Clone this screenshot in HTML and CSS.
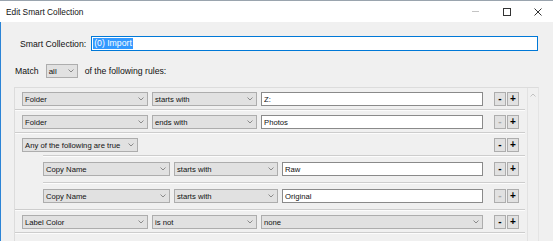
FILE: index.html
```html
<!DOCTYPE html>
<html>
<head>
<meta charset="utf-8">
<link rel="stylesheet" href="styles.css">
</head>
<body>
<div class="win">
  <div class="titlebar">
    <span class="title">Edit Smart Collection</span>
    <div class="caps">
      <div class="cap"><svg width="8" height="2" viewBox="0 0 8 2"><line x1="0" y1="0.5" x2="7" y2="0.5" stroke="#c4c4c4" stroke-width="1"/></svg></div>
      <div class="cap"><svg width="8" height="8" viewBox="0 0 8 8"><rect x="0.5" y="0.5" width="7" height="7" fill="none" stroke="#333" stroke-width="1"/></svg></div>
      <div class="cap"><svg width="8" height="8" viewBox="0 0 8 8"><path d="M0.5 0.5 L7.5 7.5 M7.5 0.5 L0.5 7.5" stroke="#333" stroke-width="1"/></svg></div>
    </div>
  </div>
  <div class="content">
    <div class="namerow">
      <span class="lbl">Smart Collection:</span>
      <div class="nameinput"><span class="seltext">(0) Import</span></div>
    </div>
    <div class="matchrow">
      <span class="lbl">Match</span>
      <div class="dd dd-all"><span>all</span><svg class="chev" width="6" height="4" viewBox="0 0 6 4"><polyline points="0.5,0.5 3,3 5.5,0.5" fill="none" stroke="#8a8a8a" stroke-width="1"/></svg></div>
      <span class="lbl">of the following rules:</span>
    </div>
    <div class="panel">
      <div class="rows">
        <div class="rule">
          <div class="dd w-field"><span>Folder</span><svg class="chev" width="6" height="4" viewBox="0 0 6 4"><polyline points="0.5,0.5 3,3 5.5,0.5" fill="none" stroke="#8a8a8a" stroke-width="1"/></svg></div>
          <div class="dd w-op"><span>starts with</span><svg class="chev" width="6" height="4" viewBox="0 0 6 4"><polyline points="0.5,0.5 3,3 5.5,0.5" fill="none" stroke="#8a8a8a" stroke-width="1"/></svg></div>
          <div class="tf w-val">Z:</div>
          <div class="btns"><div class="btn">-</div><div class="btn">+</div></div>
        </div>
        <div class="sep"></div>
        <div class="rule">
          <div class="dd w-field"><span>Folder</span><svg class="chev" width="6" height="4" viewBox="0 0 6 4"><polyline points="0.5,0.5 3,3 5.5,0.5" fill="none" stroke="#8a8a8a" stroke-width="1"/></svg></div>
          <div class="dd w-op"><span>ends with</span><svg class="chev" width="6" height="4" viewBox="0 0 6 4"><polyline points="0.5,0.5 3,3 5.5,0.5" fill="none" stroke="#8a8a8a" stroke-width="1"/></svg></div>
          <div class="tf w-val">Photos</div>
          <div class="btns"><div class="btn off">-</div><div class="btn">+</div></div>
        </div>
        <div class="sep"></div>
        <div class="rule">
          <div class="dd w-any"><span>Any of the following are true</span><svg class="chev" width="6" height="4" viewBox="0 0 6 4"><polyline points="0.5,0.5 3,3 5.5,0.5" fill="none" stroke="#8a8a8a" stroke-width="1"/></svg></div>
          <div class="btns"><div class="btn">-</div><div class="btn">+</div></div>
        </div>
        <div class="sep nested-sep"></div>
        <div class="rule nested">
          <div class="dd w-nfield"><span>Copy Name</span><svg class="chev" width="6" height="4" viewBox="0 0 6 4"><polyline points="0.5,0.5 3,3 5.5,0.5" fill="none" stroke="#8a8a8a" stroke-width="1"/></svg></div>
          <div class="dd w-nop"><span>starts with</span><svg class="chev" width="6" height="4" viewBox="0 0 6 4"><polyline points="0.5,0.5 3,3 5.5,0.5" fill="none" stroke="#8a8a8a" stroke-width="1"/></svg></div>
          <div class="tf w-nval">Raw</div>
          <div class="btns"><div class="btn">-</div><div class="btn">+</div></div>
        </div>
        <div class="sep nested-sep"></div>
        <div class="rule nested">
          <div class="dd w-nfield"><span>Copy Name</span><svg class="chev" width="6" height="4" viewBox="0 0 6 4"><polyline points="0.5,0.5 3,3 5.5,0.5" fill="none" stroke="#8a8a8a" stroke-width="1"/></svg></div>
          <div class="dd w-nop"><span>starts with</span><svg class="chev" width="6" height="4" viewBox="0 0 6 4"><polyline points="0.5,0.5 3,3 5.5,0.5" fill="none" stroke="#8a8a8a" stroke-width="1"/></svg></div>
          <div class="tf w-nval">Original</div>
          <div class="btns"><div class="btn off">-</div><div class="btn">+</div></div>
        </div>
        <div class="sep"></div>
        <div class="rule">
          <div class="dd w-field"><span>Label Color</span><svg class="chev" width="6" height="4" viewBox="0 0 6 4"><polyline points="0.5,0.5 3,3 5.5,0.5" fill="none" stroke="#8a8a8a" stroke-width="1"/></svg></div>
          <div class="dd w-op"><span>is not</span><svg class="chev" width="6" height="4" viewBox="0 0 6 4"><polyline points="0.5,0.5 3,3 5.5,0.5" fill="none" stroke="#8a8a8a" stroke-width="1"/></svg></div>
          <div class="dd w-val"><span>none</span><svg class="chev" width="6" height="4" viewBox="0 0 6 4"><polyline points="0.5,0.5 3,3 5.5,0.5" fill="none" stroke="#8a8a8a" stroke-width="1"/></svg></div>
          <div class="btns"><div class="btn">-</div><div class="btn">+</div></div>
        </div>
        <div class="sep"></div>
      </div>
      <div class="scroll">
        <svg class="up" width="6" height="4" viewBox="0 0 6 4"><polyline points="0.5,3.5 3,1 5.5,3.5" fill="none" stroke="#c2c2c2" stroke-width="1"/></svg>
      </div>
    </div>
  </div>
</div>
</body>
</html>
```

FILE: styles.css
```css
* { box-sizing: border-box; }
html, body { margin: 0; padding: 0; }
body {
  width: 553px;
  height: 241px;
  overflow: hidden;
  background: #f0f0f0;
  font-family: "Liberation Sans", Arial, sans-serif;
  color: #000;
}
.win {
  display: flex;
  flex-direction: column;
  height: 241px;
}
.titlebar {
  height: 22px;
  background: #fff;
  border-top: 1px solid #9aa4ae;
  display: flex;
  align-items: center;
  padding-left: 6px;
}
.title {
  font-size: 8.3px;
  color: #111;
}
.caps {
  margin-left: auto;
  display: flex;
  height: 100%;
}
.cap {
  width: 31px;
  display: flex;
  align-items: center;
  justify-content: center;
}
.cap svg { display: block; }
.content {
  flex: 1;
  background: #f0f0f0;
  border-left: 1px solid #2b84d6;
  display: flex;
  flex-direction: column;
  overflow: hidden;
}
.lbl {
  font-size: 8.7px;
  color: #111;
  white-space: nowrap;
}
.namerow {
  display: flex;
  align-items: center;
  padding-top: 14px;
  padding-left: 19px;
  padding-right: 15px;
  gap: 5px;
}
.nameinput {
  flex: 1;
  height: 15px;
  border: 1px solid #0078d7;
  background: #fff;
  display: flex;
  align-items: center;
  padding-left: 1px;
}
.seltext {
  background: #3399ff;
  color: #fff;
  font-size: 8.7px;
  line-height: 11px;
  padding: 0 1px;
}
.matchrow {
  display: flex;
  align-items: center;
  margin-top: 13px;
  padding-left: 14px;
  height: 14px;
}
.matchrow .dd-all { margin-left: 7px; margin-right: 7px; }
.dd {
  height: 14px;
  background: #e1e1e1;
  border: 1px solid #adadad;
  display: flex;
  align-items: center;
  padding: 0 3px 0 2px;
  font-size: 7.7px;
  color: #111;
  white-space: nowrap;
}
.dd span { flex: 1; }
.dd .chev { display: block; flex: none; }
.dd-all { width: 32px; font-size: 8px; }
.tf {
  height: 14px;
  background: #fff;
  border: 1px solid #8a8a8a;
  display: flex;
  align-items: center;
  padding-left: 2px;
  font-size: 7.7px;
  color: #111;
}
.w-field { width: 126px; }
.w-op { width: 105px; }
.w-val { width: 222px; }
.w-any { width: 116px; }
.w-nfield { width: 127px; }
.w-nop { width: 104px; }
.w-nval { width: 201px; }
.panel {
  flex: 1;
  margin-top: 9px;
  margin-left: 13px;
  width: 525px;
  border-top: 1px solid #dcdcdc;
  border-left: 1px solid #dcdcdc;
  border-right: 1px solid #e4e4e4;
  display: flex;
}
.rows {
  flex: 1;
  display: flex;
  flex-direction: column;
}
.rule {
  display: flex;
  align-items: center;
  gap: 4px;
  padding: 4px 8px 3px 7px;
}
.rule.nested {
  padding-left: 28px;
  padding-top: 5px;
  padding-bottom: 6px;
}
.btns {
  margin-left: auto;
  display: flex;
  gap: 1px;
}
.btn {
  width: 12px;
  height: 14px;
  background: #e1e1e1;
  border: 1px solid #adadad;
  display: flex;
  align-items: center;
  justify-content: center;
  font-size: 10px;
  font-weight: bold;
  color: #000;
  line-height: 1;
}
.btn.off { color: #a8a8a8; }
.sep {
  height: 2px;
  border-top: 1px solid #cdcdcd;
  border-bottom: 1px solid #fcfcfc;
  margin-right: 2px;
}
.nested-sep { margin-left: 28px; }
.scroll {
  width: 11px;
  border-left: 1px solid #e2e2e2;
  background: #f0f0f0;
  display: flex;
  justify-content: center;
  padding-top: 5px;
}
.scroll .up { display: block; }
```
